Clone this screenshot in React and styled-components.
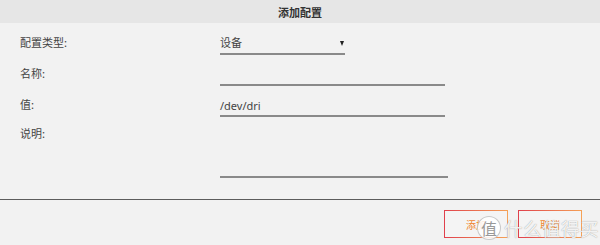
import React from "react";
import styled, { createGlobalStyle } from "styled-components";

const GlobalStyle = createGlobalStyle`
  html, body {
    margin: 0;
    padding: 0;
    background: #f2f2f2;
  }
  body {
    font-family: "Noto Sans", "Noto Sans CJK SC", sans-serif;
    font-size: 11px;
    color: #444;
  }
`;

const Dialog = styled.div`
  position: relative;
  width: 600px;
  height: 245px;
  background: #f2f2f2;
  overflow: hidden;
`;

const Header = styled.div`
  height: 23px;
  background: #e6e6e6;
  display: flex;
  align-items: center;
  justify-content: center;
  font-family: "Noto Sans CJK SC", sans-serif;
  font-weight: bold;
  font-size: 11px;
  color: #333;
`;

const Form = styled.div`
  display: flex;
  flex-direction: column;
  gap: 11px;
  padding: 12px 0 0 20px;
`;

const Row = styled.div`
  display: grid;
  grid-template-columns: 200px 1fr;
  align-items: start;
`;

const Label = styled.div`
  font-family: "Noto Sans CJK SC", sans-serif;
  font-size: 11px;
  line-height: 14px;
  color: #444;
  margin-top: ${(p) => p.$offset || 0}px;
`;

const Field = styled.div`
  box-sizing: border-box;
  width: ${(p) => p.$width}px;
  height: ${(p) => p.$height || 20}px;
  border-bottom: 2px solid #8a8a8a;
  padding-top: ${(p) => p.$pad ?? 2}px;
  font-family: "Noto Sans", "Noto Sans CJK SC", sans-serif;
  font-size: 11px;
  line-height: 14px;
  color: #444;
`;

const SelectField = styled(Field)`
  display: flex;
  justify-content: space-between;
  align-items: flex-start;
  padding-right: 1px;
`;

const Arrow = styled.span`
  width: 0;
  height: 0;
  margin-top: 5px;
  border-left: 2.5px solid transparent;
  border-right: 2.5px solid transparent;
  border-top: 5px solid #222;
`;

const Divider = styled.div`
  margin-top: 21px;
  height: 1px;
  background: #5c5c5c;
`;

const Footer = styled.div`
  display: flex;
  justify-content: flex-end;
  gap: 10px;
  padding: 10px 18px 0 0;
`;

const Button = styled.button`
  box-sizing: border-box;
  width: 64px;
  height: 28px;
  background: #f4f4f4;
  border: 1.5px solid;
  border-image: linear-gradient(90deg, #e0404c, #f5a257) 1;
  color: #f0862e;
  font-family: "Noto Sans CJK SC", sans-serif;
  font-size: 10px;
  padding: 0;
`;

const Watermark = styled.div`
  position: absolute;
  left: 477px;
  top: 216px;
  display: flex;
  align-items: center;
  gap: 3px;
  pointer-events: none;
`;

const Badge = styled.div`
  width: 22px;
  height: 22px;
  border-radius: 50%;
  background: rgba(255, 255, 255, 0.85);
  border: 1px solid rgba(150, 150, 150, 0.5);
  display: flex;
  align-items: center;
  justify-content: center;
  font-family: "Noto Sans CJK SC", sans-serif;
  font-size: 16px;
  color: #999;
`;

const MarkText = styled.span`
  font-family: "Noto Sans CJK SC", sans-serif;
  font-size: 18.5px;
  line-height: 24px;
  color: rgba(255, 255, 255, 0.9);
  text-shadow: 0 0 1px rgba(110, 110, 110, 0.8);
  letter-spacing: 0.5px;
`;

export default function App() {
  return (
    <>
      <GlobalStyle />
      <Dialog>
        <Header>添加配置</Header>
        <Form>
          <Row>
            <Label>配置类型:</Label>
            <SelectField $width={125} $pad={1}>
              <span>设备</span>
              <Arrow />
            </SelectField>
          </Row>
          <Row>
            <Label>名称:</Label>
            <Field $width={225} />
          </Row>
          <Row>
            <Label>值:</Label>
            <Field $width={225}>/dev/dri</Field>
          </Row>
          <Row>
            <Label $offset={-2}>说明:</Label>
            <Field $width={228} $height={50} />
          </Row>
        </Form>
        <Divider />
        <Footer>
          <Button>添加</Button>
          <Button>取消</Button>
        </Footer>
        <Watermark>
          <Badge>值</Badge>
          <MarkText>什么值得买</MarkText>
        </Watermark>
      </Dialog>
    </>
  );
}
